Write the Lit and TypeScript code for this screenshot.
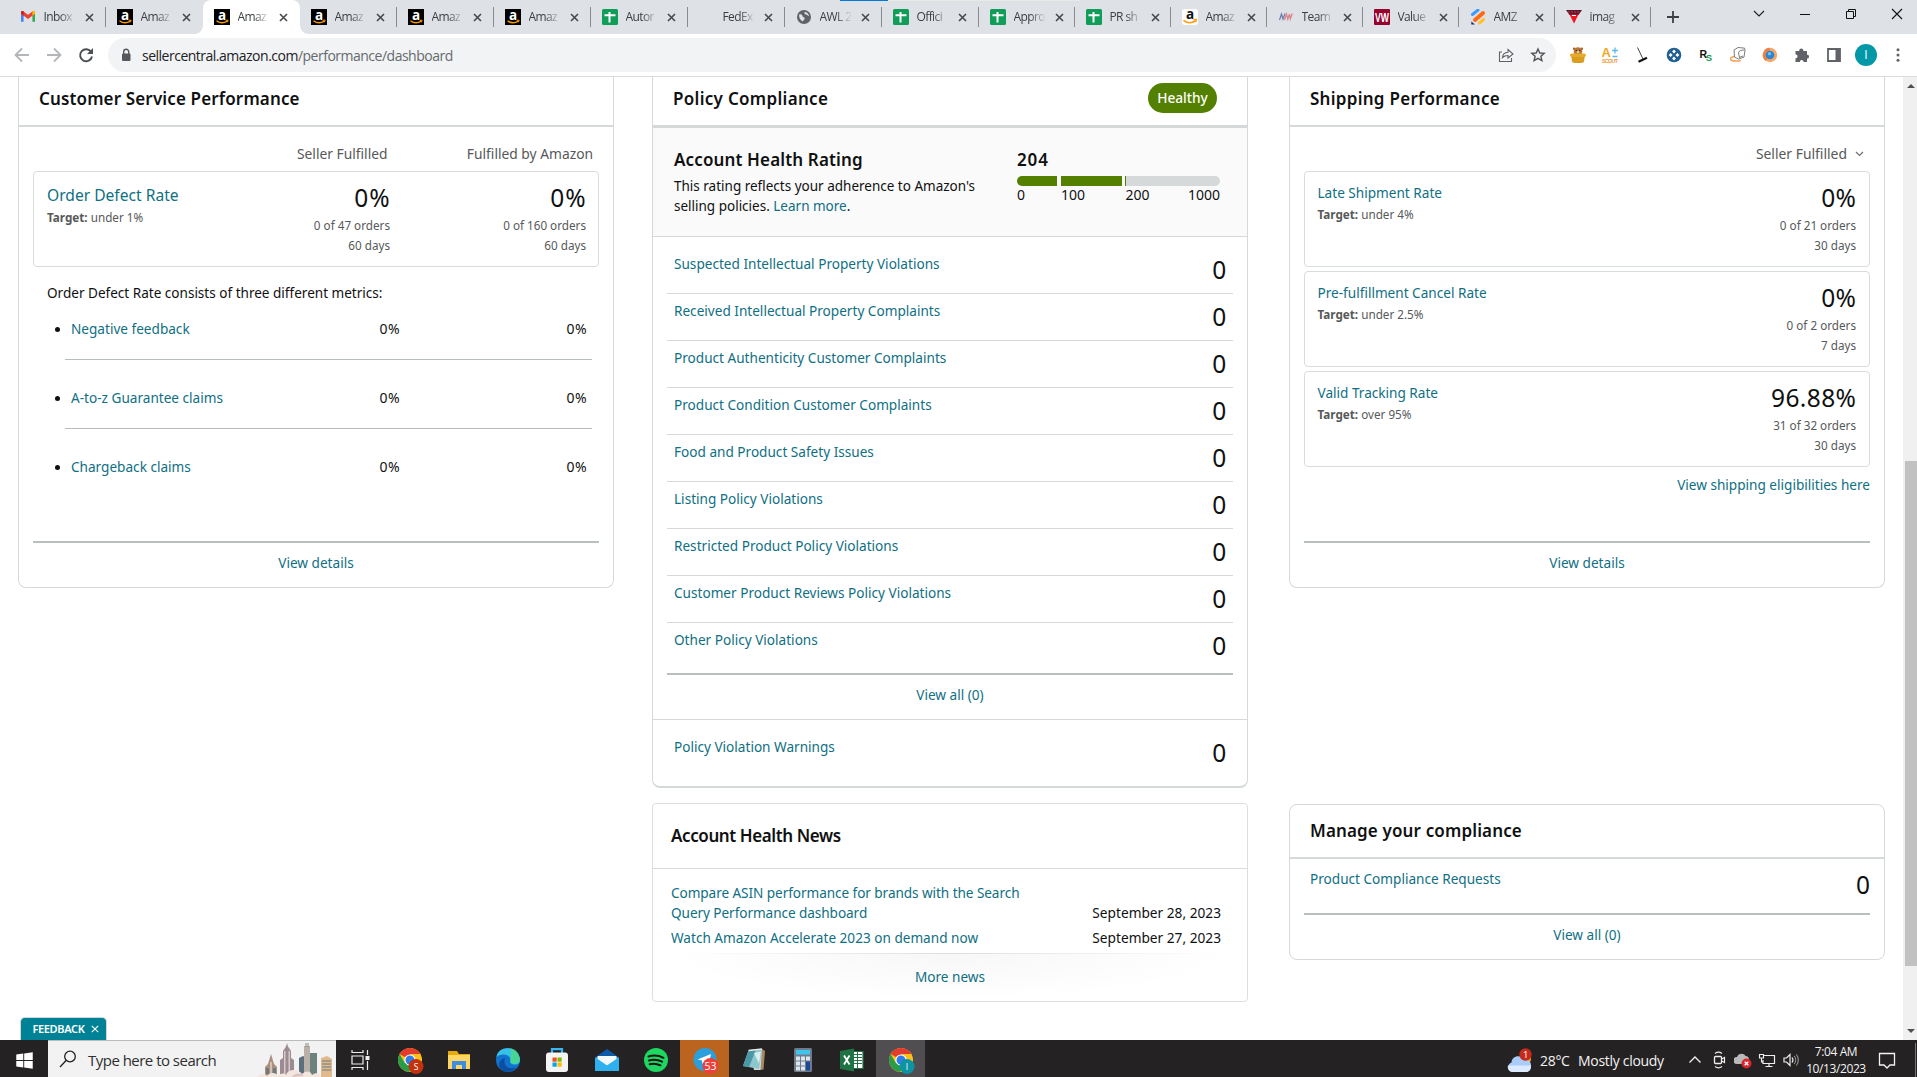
import { LitElement, html, css, svg, nothing } from "lit";
import { customElement, property } from "lit/decorators.js";
import { classMap } from "lit/directives/class-map.js";

const UI = css`"Open Sans", "Noto Sans", "Liberation Sans", sans-serif`;
const EMBER = css`"Noto Sans", "Open Sans", "Liberation Sans", sans-serif`;

const box = (size: number, body: unknown, vb = "0 0 24 24") =>
  html`<svg width=${size} height=${size} viewBox=${vb} fill="none">${body}</svg>`;

/* ---------- favicons (16 x 16) ---------- */
const fav: Record<string, unknown> = {
  gmail: svg`<path d="M1 3.500v9.200h2.600V6.600z" fill="#4285f4"/><path d="M15 3.500v9.200h-2.600V6.600z" fill="#34a853"/>
    <path d="M1 3.600C1 2 2.800 1.800 3.600 2.400L8 5.700l4.400-3.300C13.300 1.800 15 2 15 3.600v1.200L8 10 1 4.800z" fill="#ea4335"/>
    <path d="M12.400 2.400C13.300 1.800 15 2 15 3.600v1.200l-2.600 2z" fill="#fbbc04"/><path d="M1 3.600C1 2 2.800 1.800 3.600 2.400v4.400L1 4.800z" fill="#c5221f"/>`,
  amazon: svg`<rect width="16" height="16" fill="#000"/><text x="8" y="10.500" text-anchor="middle" font-size="13.500" font-weight="700" font-family="Open Sans, sans-serif" fill="#fff">a</text><path d="M2.500 11.800c3.200 2.400 7.300 2.500 10.800.4" stroke="#f90" stroke-width="1.400"/><path d="M11.700 11.300l2.400-.2-.7 2.200" stroke="#f90" stroke-width="1"/>`,
  amazonLight: svg`<rect width="16" height="16" rx="3" fill="#fff"/><text x="8" y="10" text-anchor="middle" font-size="13.500" font-weight="700" font-family="Open Sans, sans-serif" fill="#111">a</text><path d="M1.500 11.300c3.500 3 8.300 3.100 12 .4" stroke="#f90" stroke-width="1.700"/><path d="M11.500 10.700l3-.2-.8 2.700" stroke="#f90" stroke-width="1.200"/>`,
  sheets: svg`<rect width="16" height="16" rx="1.500" fill="#0f9d58"/><path d="M7.500 3v10.500M2.500 6.200h11" stroke="#fff" stroke-width="2"/>`,
  blank: nothing,
  globe: svg`<circle cx="8" cy="8" r="7" fill="#5f6368"/><path d="M3.200 5.500c1.500-.5 3 .2 3.300 1.400.4 1.300 2 1 2.200 2.400.2 1.300-1.500 1.500-1.700 3.200-2.300-.8-4.300-3.700-3.800-7zM8.500 3c2.500 0 4.300 2 4.500 4.200-1.600 0-1.500-1.500-3-1.600-1.200-.1-1.800-1.300-1.500-2.600z" fill="#dee1e6"/>`,
  team: svg`<path d="M1.500 11l2-6 1.500 5 2-5.500" stroke="#3f4f95" stroke-width="1.200" opacity=".7"/><path d="M6.500 11l2-6 1.300 5 1.700-5 .8 5 2-5.500" stroke="#d96570" stroke-width="1.300" opacity=".75"/>`,
  vw: svg`<rect width="16" height="16" rx="1" fill="#98002e"/><text x="8" y="12.600" text-anchor="middle" font-size="12" font-weight="700" textLength="14" lengthAdjust="spacingAndGlyphs" font-family="Liberation Sans, sans-serif" fill="#fff">VW</text>`,
  amz: svg`<path d="M2.500 5.500L8 1" stroke="#3b9cff" stroke-width="3" stroke-linecap="round"/><path d="M5 11l8-7" stroke="#ff6a13" stroke-width="4" stroke-linecap="round"/><path d="M1.300 12.500L5 15.500H1.300z" fill="#1a2a6c"/><path d="M9.500 14l4-3.500" stroke="#ffc22e" stroke-width="3" stroke-linecap="round"/>`,
  imag: svg`<path d="M0 1h16l-3.500 5h-9z" fill="#5b1833"/><path d="M3.500 5.500h9L8 14.500z" fill="#ef1620"/><path d="M6 6.500h4" stroke="#fff"/><path d="M2 3h12" stroke="#d33" stroke-dasharray="2 1"/>`,
};

const TABS: [string, string][] = [
  ["gmail", "Inbox"], ["amazon", "Amaz"], ["amazon", "Amaz"], ["amazon", "Amaz"], ["amazon", "Amaz"], ["amazon", "Amaz"],
  ["sheets", "Autor"], ["blank", "FedEx"], ["globe", "AWL 2"], ["sheets", "Offici"], ["sheets", "Appro"], ["sheets", "PR sh"],
  ["amazonLight", "Amaz"], ["team", "Team"], ["vw", "Value"], ["amz", "AMZ"], ["imag", "imag"],
];

/* ---------- browser chrome ---------- */
@customElement("browser-chrome")
class BrowserChrome extends LitElement {
  static styles = css`
    :host { display: block; font-family: ${UI}; color: #3c4043; }
    svg { display: block; flex: none; }
    .strip { position: relative; height: 34px; background: #dee1e6; display: flex; align-items: stretch; padding-left: 9px; box-sizing: border-box; }
    .progress { position: absolute; left: 840px; top: 0; width: 241px; height: 1px; background: #e9e9e9; z-index: 2; }
    .progress i { display: block; width: 48px; height: 1px; background: #0078d7; }
    .tab { position: relative; width: 97px; box-sizing: border-box; display: flex; align-items: center; padding: 0 0 0 11px; }
    .tab.narrow { width: 96px; }
    .tab .name { font-size: 12px; width: 35px; margin-left: 7.500px; white-space: nowrap; line-height: 20px; letter-spacing: -.6px;
      -webkit-mask-image: linear-gradient(90deg, #000 45%, transparent 92%); mask-image: linear-gradient(90deg, #000 45%, transparent 92%); }
    .tab .x { margin-left: 6px; }
    .tab.sep::after { content: ""; position: absolute; right: 0; top: 7px; width: 1px; height: 20px; background: #868b90; }
    .tab.active { background: #fff; border-radius: 8px 8px 0 0; }
    .tab.active::before, .tab.active::after { content: ""; position: absolute; bottom: 0; width: 8px; height: 8px; }
    .tab.active::before { left: -8px; background: radial-gradient(circle at 0 0, transparent 7.500px, #fff 8px); }
    .tab.active::after { right: -8px; background: radial-gradient(circle at 100% 0, transparent 7.500px, #fff 8px); }
    .plus { display: flex; align-items: center; margin-left: 15px; }
    .win { margin-left: auto; display: flex; align-items: center; height: 28px; padding-right: 12px; gap: 30px; }
    .bar { height: 42px; background: #fff; display: flex; align-items: center; border-bottom: 1px solid #dadce0; padding-left: 14px; }
    .nav { display: flex; gap: 16px; width: 94px; }
    .omni { width: 1448px; height: 34px; border-radius: 17px; background: #f1f3f4; box-sizing: border-box; display: flex; align-items: center; padding: 0 10px 0 10px; }
    .url { font-size: 14px; margin-left: 8px; color: #202124; letter-spacing: -.5px; line-height: 20px; white-space: nowrap; padding-top: 1px; }
    .url span { color: #666a6e; }
    .omni .right { margin-left: auto; display: flex; gap: 16px; }
    .ext { display: flex; gap: 16px; margin-left: 14px; align-items: center; }
    .ava { width: 22px; height: 22px; margin: 0 -3px; border-radius: 50%; background: #0097a7; color: #fff; font-size: 12px; line-height: 22px; text-align: center; }
  `;
  render() {
    return html`
      <div class="strip">
        <div class="progress"><i></i></div>
        ${TABS.map(([icon, name], i) => html`
          <div class=${classMap({ tab: true, narrow: i > 9, active: i === 2, sep: i !== 1 && i !== 2 })}>
            ${box(16, fav[icon], "0 0 16 16")}
            <span class="name">${name}</span>
            <svg class="x" width="9" height="9" viewBox="0 0 9 9"><path d="M1 1l7 7M8 1l-7 7" stroke="#45494d" stroke-width="1.600"/></svg>
          </div>`)}
        <div class="plus">${box(14, svg`<path d="M7 1v12M1 7h12" stroke="#3c4043" stroke-width="1.800"/>`, "0 0 14 14")}</div>
        <div class="win">
          ${box(16, svg`<path d="M3 5l5 5 5-5" stroke="#222" stroke-width="1.200"/>`, "0 0 16 16")}
          ${box(16, svg`<path d="M3 8.500h10" stroke="#111" stroke-width="1"/>`, "0 0 16 16")}
          ${box(16, svg`<path d="M3.500 5.500h7v7h-7zM5.500 5.500v-2h7v7h-2" stroke="#111"/>`, "0 0 16 16")}
          ${box(16, svg`<path d="M3 3l10 10M13 3L3 13" stroke="#111" stroke-width="1.100"/>`, "0 0 16 16")}
        </div>
      </div>
      <div class="bar">
        <div class="nav">
          ${box(16, svg`<path d="M15 8H2M8 1.500L1.500 8 8 14.500" stroke="#b4b7ba" stroke-width="1.800"/>`, "0 0 16 16")}
          ${box(16, svg`<path d="M1 8h13M8 1.500L14.500 8 8 14.500" stroke="#b4b7ba" stroke-width="1.800"/>`, "0 0 16 16")}
          ${box(16, svg`<path d="M13.200 5A6 6 0 1 0 14 9.500" stroke="#4b4f54" stroke-width="1.900"/><path d="M15 1v6H9z" fill="#4b4f54"/>`, "0 0 16 16")}
        </div>
        <div class="omni">
          ${box(16, svg`<rect x="4" y="6.500" width="8.500" height="7.500" rx="1" fill="#54585d"/><path d="M5.700 7V4.800a2.500 2.500 0 0 1 5 0V7" stroke="#54585d" stroke-width="1.400"/>`, "0 0 16 16")}
          <div class="url">sellercentral.amazon.com<span>/performance/dashboard</span></div>
          <div class="right">
            ${box(16, svg`<path d="M4 5H1.500v9.500h12V11" stroke="#5f6368" stroke-width="1.100"/><path d="M4.500 10.500c.3-3.500 2-5 5.500-5.200V2.500l5 4.500-5 4V8.500c-2.300 0-4 .5-5.500 2z" stroke="#5f6368" stroke-width="1.100"/>`, "0 0 16 16")}
            ${box(16, svg`<path d="M8 2l1.800 4 4.400.4-3.300 2.900 1 4.300L8 11.300l-3.900 2.300 1-4.300-3.300-2.900L6.200 6z" stroke="#4f5358" stroke-width="1.400"/>`, "0 0 16 16")}
          </div>
        </div>
        <div class="ext">
          ${box(16, svg`<circle cx="4.300" cy="1.800" r="1.400" fill="#a0642a"/><circle cx="11.700" cy="1.800" r="1.400" fill="#a0642a"/><circle cx="8" cy="4.500" r="4.300" fill="#b9783a"/><circle cx="6.300" cy="3.500" r=".7" fill="#43270f"/><circle cx="9.700" cy="3.500" r=".7" fill="#43270f"/><circle cx="8" cy="5" r="1.300" fill="#ecc994"/><rect x="0" y="6.500" width="16" height="3.600" rx="1.800" fill="#e5ab2a"/><path d="M1.300 10h13.400l-.7 4.500c0 1-2 1.500-6 1.500s-6-.5-6-1.500z" fill="#d99d20"/>`, "0 0 16 16")}
          ${box(16, svg`<text x="-.5" y="10.300" font-size="13" font-weight="700" font-family="Liberation Sans, sans-serif" fill="#f7a823">A</text><path d="M10 3.500h6M13 .5v6M10.500 9.500h5" stroke="#5cbcec" stroke-width="1.300"/><text x="0" y="15.500" font-size="5.300" font-weight="700" textLength="16" font-family="Liberation Sans, sans-serif" fill="#f0983a">SCOUT</text>`, "0 0 16 16")}
          ${box(16, svg`<path d="M3.500.5L9 12" stroke="#444" stroke-width="1"/><path d="M4.500 14.800l8.500-4" stroke="#111" stroke-width="2.200"/>`, "0 0 16 16")}
          ${box(16, svg`<circle cx="8" cy="8" r="7.300" fill="#205f8f"/><path d="M8 2.600l1.900 2L8 6.600l-1.900-2zM8 9.400l1.900 2-1.900 2-1.900-2zM4.600 6l2 2-2 2-2-2zM11.400 6l2 2-2 2-2-2z" fill="#fff"/>`, "0 0 16 16")}
          ${box(16, svg`<text x="1.500" y="11" font-size="10.500" font-weight="700" font-family="Liberation Sans, sans-serif" fill="#111">R</text><text x="7.700" y="13.500" font-size="9.500" font-weight="700" font-family="Liberation Sans, sans-serif" fill="#15964a">S</text>`, "0 0 16 16")}
          ${box(16, svg`<path d="M4.500 9.500C0 10.500-.5 12 1 13c2.500 1.300 7 1.200 10 .5" stroke="#f2a45c" stroke-width="1.500"/><path d="M4 3l4-2.500 6.500.6.500 2-1 7-5.500 2L4.500 10zM9.500 10.500L8.500 6C9 3.500 11 3 14.500 3M9 10.500l4-1.500" stroke="#7c7c7c" stroke-width="1"/>`, "0 0 16 16")}
          ${box(16, svg`<circle cx="8" cy="8" r="7.200" fill="#f7a76a"/><path d="M8 .8a7.200 7.200 0 0 0-4 13.200l2-3z" fill="#ee8044"/><circle cx="8" cy="8" r="4.300" fill="#2a86d0"/><circle cx="7.500" cy="6.800" r="1.700" fill="#6cc0f5"/>`, "0 0 16 16")}
          ${box(16, svg`<path d="M1.500 4h3.800c-.8-3.500 4.800-3.500 4 0h3.700v3.700c2.700-.6 2.700 4.300 0 3.700V15H9.500c.5-2.700-4-2.700-3.500 0H1.500v-3.700c2.700.5 2.700-4.200 0-3.700z" fill="#5f6368"/>`, "0 0 16 16")}
          ${box(16, svg`<path d="M2 2h12v12H2z" stroke="#5f6368" stroke-width="1.800"/><path d="M9.500 2H14v12H9.500z" fill="#5f6368"/>`, "0 0 16 16")}
          <div class="ava">I</div>
          ${box(16, svg`<circle cx="8" cy="2.700" r="1.500" fill="#5f6368"/><circle cx="8" cy="8" r="1.500" fill="#5f6368"/><circle cx="8" cy="13.300" r="1.500" fill="#5f6368"/>`, "0 0 16 16")}
        </div>
      </div>`;
  }
}

/* ---------- shared card styles ---------- */
const card = css`
  :host { display: block; font-family: ${EMBER}; font-size: 13.600px; line-height: 20px; color: #0f1111; }
  .card { border: 1px solid #d5d9d9; border-radius: 8px; background: #fff; box-sizing: border-box; width: 596px; }
  .card.cut { border-top: 0; border-radius: 0 0 8px 8px; }
  .link { color: #0f6f83; }
  .title { font-weight: 600; font-size: 17px; line-height: 24px; white-space: nowrap; letter-spacing: .14px; }
  .head { border-bottom: 2px solid #d5d9d9; box-sizing: border-box; padding-left: 20px; }
  .num { font-size: 24.500px; line-height: 28px; letter-spacing: .4px; margin-right: -.4px; }
  .rule { height: 2px; background: #b8bfbf; margin: 0 14px; }
  .foot { text-align: center; line-height: 20px; padding-top: 10px; }
  .small { font-size: 11.700px; color: #565959; line-height: 20px; }
  .metric { border: 1px solid #d9dcdc; border-radius: 4px; height: 96px; box-sizing: border-box; display: flex; justify-content: space-between; }
  .vals { text-align: right; padding-top: 12px; }
  .vals .small:nth-child(2) { margin-top: 3px; }
`;

@customElement("service-card")
class ServiceCard extends LitElement {
  static styles = [card, css`
    .card { height: 511px; }
    .head { height: 50px; padding-top: 10px; }
    .cols { display: flex; padding: 17px 20px 0 278px; justify-content: space-between; color: #565959; font-size: 13.800px; }
    .metric { margin: 7px 14px 0; }
    .lead { padding: 11px 0 0 13px; }
    .lead .big { font-size: 15.600px; line-height: 24px; }
    .pair { display: flex; }
    .pair .vals:first-child { width: 120px; }
    .pair .vals { width: 196px; }
    .metric .pair { padding-right: 12px; }
    .pair .num { letter-spacing: 1px; margin-right: -.5px; }
    .intro { margin: 16px 0 0 28px; font-size: 13.550px; }
  `];
  render() {
    const rows = ["Negative feedback", "A-to-z Guarantee claims", "Chargeback claims"];
    return html`<section class="card cut">
      <div class="head title">Customer Service Performance</div>
      <div class="cols"><span>Seller Fulfilled</span><span>Fulfilled by Amazon</span></div>
      <div class="metric">
        <div class="lead"><div class="big link">Order Defect Rate</div><div class="small"><b>Target:</b> under 1%</div></div>
        <div class="pair">
          <div class="vals"><div class="num">0%</div><div class="small">0 of 47 orders</div><div class="small">60 days</div></div>
          <div class="vals"><div class="num">0%</div><div class="small">0 of 160 orders</div><div class="small">60 days</div></div>
        </div>
      </div>
      <div class="intro">Order Defect Rate consists of three different metrics:</div>
      <metric-list .rows=${rows}></metric-list>
      <div class="rule"></div>
      <div class="foot link">View details</div>
    </section>`;
  }
}

@customElement("metric-list")
class MetricList extends LitElement {
  @property({ attribute: false }) rows: string[] = [];
  static styles = [card, css`
    :host { padding: 16px 21px 0 34px; height: 238px; box-sizing: border-box; }
    .row { display: flex; align-items: center; height: 20px; }
    .row i { width: 5px; height: 5px; border-radius: 50%; background: #0f1111; margin: 0 11px 0 2px; }
    .row .link { flex: 1; white-space: nowrap; }
    .row span { width: 187px; text-align: right; padding-right: 5px; box-sizing: border-box; font-size: 14px; letter-spacing: .4px; }
    .row span:first-of-type { width: 120px; }
    .line { height: 1px; background: #b7bdbd; margin: 20px 0 28px 12px; }
  `];
  render() {
    return this.rows.map((r, i) => html`
      ${i ? html`<div class="line"></div>` : nothing}
      <div class="row"><i></i><div class="link">${r}</div><span>0%</span><span>0%</span></div>`);
  }
}

@customElement("policy-card")
class PolicyCard extends LitElement {
  static styles = [card, css`
    .card { height: 711px; border-bottom-width: 2px; }
    .head { height: 51px; border-bottom-width: 3px; display: flex; justify-content: space-between; padding: 6px 30px 0 20px; }
    .head .title { padding-top: 4px; letter-spacing: .3px; }
    .pill { background: #538000; color: #fff; height: 30px; width: 69px; border-radius: 15px; text-align: center; line-height: 29px; font-size: 13.700px; font-weight: 500; }
    .rating { height: 109px; background: #fafafa; border-bottom: 1px solid #d5d9d9; box-sizing: border-box; display: flex; justify-content: space-between; padding: 20px 27px 0 21px; }
    .rating p { margin: 4px 0 0; width: 320px; line-height: 20px; font-size: 13.500px; }
    .score { width: 203px; }
    .score .title { letter-spacing: .9px; }
    .meter { display: flex; height: 10px; border-radius: 5px; overflow: hidden; margin-top: 4px; }
    .meter i { background: #538000; }
    .meter .a { width: 40px; margin-right: 4px; } .meter .b { width: 61px; margin-right: 3px; } .meter .c { width: 1px; }
    .meter .rest { background: #d5d9d9; flex: 1; }
    .ticks { display: grid; grid-template-columns: 44px 64.500px 1fr auto; line-height: 18px; font-size: 14px; }
    .rows { padding: 10px 14px 0; }
    .row { display: flex; justify-content: space-between; padding: 7px 7px 1px; border-bottom: 1px solid #d5d9d9; height: 38px; }
    .row:last-child { border: 0; height: 42px; }
    .foot { height: 34px; border-bottom: 1px solid #d5d9d9; }
    .warn { display: flex; justify-content: space-between; padding: 17px 21px 0; }
    .num { padding-top: 2px; margin-right: -.6px; }
  `];
  render() {
    const rows = ["Suspected Intellectual Property Violations", "Received Intellectual Property Complaints",
      "Product Authenticity Customer Complaints", "Product Condition Customer Complaints", "Food and Product Safety Issues",
      "Listing Policy Violations", "Restricted Product Policy Violations", "Customer Product Reviews Policy Violations", "Other Policy Violations"];
    return html`<section class="card cut">
      <div class="head"><div class="title">Policy Compliance</div><div class="pill">Healthy</div></div>
      <div class="rating">
        <div><div class="title">Account Health Rating</div>
          <p>This rating reflects your adherence to Amazon's<br>selling policies. <span class="link">Learn more</span>.</p></div>
        <div class="score"><div class="title">204</div>
          <div class="meter"><i class="a"></i><i class="b"></i><i class="c"></i><i class="rest"></i></div>
          <div class="ticks"><span>0</span><span>100</span><span>200</span><span>1000</span></div></div>
      </div>
      <div class="rows">${rows.map((r) => html`<div class="row"><span class="link">${r}</span><span class="num">0</span></div>`)}</div>
      <div class="rule"></div>
      <div class="foot link">View all (0)</div>
      <div class="warn"><span class="link">Policy Violation Warnings</span><span class="num">0</span></div>
    </section>`;
  }
}

@customElement("shipping-card")
class ShippingCard extends LitElement {
  static styles = [card, css`
    .card { height: 511px; }
    .head { height: 50px; padding-top: 10px; letter-spacing: .27px; }
    .pick { display: flex; justify-content: flex-end; align-items: center; gap: 8px; padding: 17px 20px 0 0; color: #565959; font-size: 13.900px; }
    .list { display: grid; gap: 4px; margin: 7px 14px 0; }
    .lead { padding: 11px 0 0 12.500px; }
    .lead .small { padding-top: 1px; }
    .metric { padding-right: 13px; }
    .elig { text-align: right; margin: 8px 14px 46px 0; }
  `];
  render() {
    const rows = [["Late Shipment Rate", "under 4%", "0%", "0 of 21 orders", "30 days"],
      ["Pre-fulfillment Cancel Rate", "under 2.5%", "0%", "0 of 2 orders", "7 days"],
      ["Valid Tracking Rate", "over 95%", "96.88%", "31 of 32 orders", "30 days"]];
    return html`<section class="card cut">
      <div class="head title">Shipping Performance</div>
      <div class="pick"><span>Seller Fulfilled</span><svg width="9" height="7" viewBox="0 0 9 7" fill="none"><path d="M1 1l3.500 3.500L8 1" stroke="#6a6f6f" stroke-width="1.200"/></svg></div>
      <div class="list">${rows.map(([n, t, v, o, d]) => html`<div class="metric">
        <div class="lead"><div class="link">${n}</div><div class="small"><b>Target:</b> ${t}</div></div>
        <div class="vals"><div class="num">${v}</div><div class="small">${o}</div><div class="small">${d}</div></div></div>`)}</div>
      <div class="elig link">View shipping eligibilities here</div>
      <div class="rule"></div>
      <div class="foot link">View details</div>
    </section>`;
  }
}

@customElement("news-card")
class NewsCard extends LitElement {
  static styles = [card, css`
    .card { height: 199px; border-radius: 4px; border-color: #dcdfdf; }
    .head { height: 65px; border-bottom: 1px solid #d9dcdc; padding: 20px 0 0 18px; letter-spacing: -.4px; }
    .body { padding: 14px 26px 0 18px; }
    .item { display: flex; justify-content: space-between; align-items: flex-end; margin-bottom: 5px; }
    .item span:last-child { font-size: 13.700px; }
    .item:first-child .link { letter-spacing: -.07px; }
    .more { height: 46px; margin-top: 1px; text-align: center; line-height: 48px; background:
      linear-gradient(90deg, transparent 4%, rgba(0,0,0,.1) 50%, transparent 96%) top / 100% 1px no-repeat,
      radial-gradient(ellipse 48% 100% at 50% 0, rgba(0,0,0,.03), transparent); }
  `];
  render() {
    return html`<section class="card">
      <div class="head title">Account Health News</div>
      <div class="body">
        <div class="item"><span class="link">Compare ASIN performance for brands with the Search<br>Query Performance dashboard</span><span>September 28, 2023</span></div>
        <div class="item"><span class="link">Watch Amazon Accelerate 2023 on demand now</span><span>September 27, 2023</span></div>
      </div>
      <div class="more link">More news</div>
    </section>`;
  }
}

@customElement("compliance-card")
class ComplianceCard extends LitElement {
  static styles = [card, css`
    .card { height: 156px; }
    .head { height: 54px; padding-top: 14px; }
    .row { display: flex; justify-content: space-between; padding: 10px 14px 0 20px; height: 44px; }
    .row .num { padding-top: 1.500px; }
  `];
  render() {
    return html`<section class="card">
      <div class="head title">Manage your compliance</div>
      <div class="row"><span class="link">Product Compliance Requests</span><span class="num">0</span></div>
      <div class="rule"></div>
      <div class="foot link">View all (0)</div>
    </section>`;
  }
}

/* ---------- taskbar ---------- */
const chromeLogo = (letter: string, color: string) => svg`
  <circle cx="12" cy="12" r="12" fill="#fbc116"/>
  <path d="M12 12L1.600 6A12 12 0 0 1 22.400 6H12z" fill="#e33b2e"/>
  <path d="M1.600 6a12 12 0 0 0 9.400 18l5.500-9.500L12 12 6.800 15z" fill="#2a9b48"/>
  <circle cx="12" cy="12" r="5.600" fill="#fff"/><circle cx="12" cy="12" r="4.500" fill="#2f7de8"/>
  <circle cx="18" cy="18.500" r="7.500" fill=${color}/>
  <text x="18" y="21.500" font-size="8.500" text-anchor="middle" font-family="Open Sans, sans-serif" fill="#fff">${letter}</text>`;

const APPS: [string, unknown][] = [
  ["", svg`<path d="M4 4.500h11M4 19.500h11M4 8h11v8H4zM4 2v3M15 2v3M4 19v3M15 19v3M19.500 2v5M19.500 13v9" stroke="#eee" stroke-width="1.200"/><rect x="17.500" y="8" width="4" height="4" fill="#eee"/>`],
  ["", chromeLogo("S", "#c2320f")],
  ["", svg`<path d="M1 3h9l2 3h11v15H1z" fill="#e8a70b"/><path d="M1 7h22v14H1z" fill="#ffd666"/><path d="M5 13h14v8h-4v-4H9v4H5z" fill="#3b8ee0"/>`],
  ["", svg`<circle cx="12" cy="12" r="12" fill="#1273cf"/><path d="M.5 9C2-3 21-3 24 11c.5 5-4 6.500-8 5-3-1-1-3-1.500-5C13 6 5 5 .5 9z" fill="#35c1e8"/><path d="M14 .3c6 1 9.500 5 9.800 11 0 4-4.500 5.500-8 4-3-1-1-3-1.500-5 1-3 1-7-.3-10z" fill="#4fdc7c" opacity=".75"/><path d="M8.500 13c-.5 5 5 9.500 12 6-4 6-12 6-15.500 2.500C1 17 4 11 9 10z" fill="#0c4ea0"/>`],
  ["", svg`<path d="M7 6V1.200h10V6" stroke="#37b8f4" stroke-width="2.200"/><rect x="1" y="4.500" width="22" height="19.500" rx="3" fill="#f4f4f4"/><path d="M7.500 9.500h4.200v4.200H7.500z" fill="#f25022"/><path d="M12.500 9.500h4.200v4.200h-4.200z" fill="#7fba00"/><path d="M7.500 14.500h4.200v4.200H7.500z" fill="#00a4ef"/><path d="M12.500 14.500h4.200v4.200h-4.200z" fill="#ffb900"/>`],
  ["", svg`<path d="M0 9.500L12 1l12 8.500z" fill="#0f5aa8"/><path d="M0 9.500h24V23H0z" fill="#33b4ee"/><path d="M2.500 8h19v3L12 17.500 2.500 11z" fill="#f5f8fb"/><path d="M0 9.500l12 8.300 12-8.300V23H0z" fill="#2fb0ef"/>`],
  ["", svg`<circle cx="12" cy="12" r="12" fill="#1ed760"/><path d="M4.500 8.500c5-1.500 10.500-1 15 1.300M5 12.500c4.500-1.200 9-.8 13 1.200M5.700 16.200c3.700-1 7.300-.6 10.800 1.100" stroke="#141414" stroke-width="2" stroke-linecap="round"/>`],
  ["orange", svg`<circle cx="12" cy="11.500" r="11.500" fill="#2b9fdb"/><path d="M4.500 11.500L18 6l-2.500 11-4-3-2 2-.5-3.500z" fill="#fff"/><circle cx="17.500" cy="18" r="8" fill="#ef3f3a"/><text x="17.500" y="21.800" font-size="10.500" text-anchor="middle" font-family="Open Sans, sans-serif" fill="#fff">53</text>`],
  ["", svg`<path d="M20 1l3 2-1.500 18.500L17 22z" fill="#a88a5e"/><path d="M7 2l13-1-1.500 21H12z" fill="#cfd8da"/><path d="M6.500 2.500L20 1l-3 20L1 18z" fill="#8fc7cf"/><path d="M6.500 2.500L14 1.600 7 19.200 1 18z" fill="#4a98a8"/><path d="M12 5l7-1.500-2 12z" fill="#d8eff0"/><path d="M6.500 2.500L20 1" stroke="#e8e8e8" stroke-width="1.500"/>`],
  ["", svg`<rect x="3" y="0" width="18" height="24" rx="1.500" fill="#6f7b8b"/><path d="M5 2h14v4.500H5z" fill="#3fc5f0"/><path d="M5 8.500h4v4H5zM10 8.500h4v4h-4zM15 8.500h4v4h-4zM5 13.500h4v4H5zM10 13.500h4v4h-4zM5 18.500h4v4H5zM10 18.500h4v4h-4z" fill="#dfe5ec"/><path d="M15 13.500h4v9h-4z" fill="#1c4b96"/>`],
  ["", svg`<path d="M12 3.500h11v17H12z" fill="#fff" stroke="#1f7244" stroke-width="1.200"/><path d="M13 6.500h9M13 9.500h9M13 12.500h9M13 15.500h9M17.500 4v16" stroke="#1f7244"/><path d="M0 3l14-2.500v23L0 21z" fill="#1f7244"/><path d="M4 7.500l5.500 9M9.500 7.500L4 16.500" stroke="#fff" stroke-width="1.800"/>`],
  ["lit", chromeLogo("I", "#0d93a3")],
];

@customElement("task-bar")
class TaskBar extends LitElement {
  static styles = css`
    :host { display: flex; height: 37px; background: #242223; font-family: ${UI}; color: #f3f3f3; align-items: stretch; }
    svg { display: block; flex: none; }
    .start { width: 48px; display: flex; align-items: center; justify-content: center; padding-top: 3px; box-sizing: border-box; }
    .search { width: 288px; height: 37px; background: #f2f2f2; border-top: 1px solid #bbb; box-sizing: border-box; display: flex; align-items: center; color: #2f2f2f; padding-left: 11px; overflow: hidden; }
    .search span { font-size: 15px; letter-spacing: -.52px; margin-left: 11px; flex: 1; padding-top: 2px; white-space: nowrap; }
    .search .city { align-self: flex-end; }
    .apps { display: flex; }
    .app { width: 49.100px; display: flex; align-items: center; justify-content: center; padding: 3px 0 0 1px; box-sizing: border-box; }
    .app:first-child { padding-left: 0; padding-right: 1px; }
    .app.orange { background: #bb641f; } .app.lit { background: #504e50; }
    .app svg { overflow: visible; }
    .tray { margin-left: auto; display: flex; align-items: center; padding: 3px 1px 0 0; box-sizing: border-box; font-size: 14px; letter-spacing: -.3px; white-space: nowrap; }
    .tray .temp { margin-left: 8px; width: 38px; }
    .tray .sky { width: 108px; }
    .icons { display: flex; gap: 6px; }
    .clock { width: 72px; font-size: 12px; line-height: 17.500px; text-align: center; letter-spacing: -.4px; }
    .note { width: 44px; display: flex; justify-content: flex-start; border-right: 1px solid #777; padding-left: 6px; height: 34px; align-items: center; box-sizing: border-box; }
  `;
  render() {
    return html`
      <div class="start">${box(17, svg`<path d="M0 2.500L6.800 1.500v6.300H0zM7.700 1.400L16 .2v7.600H7.700zM0 8.700h6.800V15L0 14zM7.700 8.700H16v7.600L7.700 15.100z" fill="#fff"/>`, "0 0 16 16.500")}</div>
      <div class="search">
        ${box(18, svg`<circle cx="11" cy="6.500" r="5.300" stroke="#222" stroke-width="1.300"/><path d="M7.300 10.300L1 17" stroke="#222" stroke-width="1.300"/>`, "0 0 18 18")}
        <span>Type here to search</span>
        <svg class="city" width="78" height="34" viewBox="0 0 78 34">
          <path d="M7 34V24l3-3 1.500-5L13 11l1.500 5 1.500 5 3 3v10z" fill="#a98f80"/><path d="M12 19h2v12h-2z" fill="#d7bfae"/><path d="M8 25h3v6H8zM15 25h3v6h-3z" fill="#6c7c7a"/>
          <path d="M22 34V17l3-2V8l3-4.500L29 0l1 3.500L33 8v7l3 2v17z" fill="#9c8b93"/><path d="M26 8h1.500v26H26zM30.500 8H32v26h-1.500z" fill="#d8c9c9"/>
          <path d="M41 34V15l4-2 4 2v19z" fill="#5d6e7c"/><path d="M46 3h6v31h-6z" fill="#b9b0a8"/><path d="M48 0v4M50 0v4" stroke="#888"/>
          <path d="M52 10h7v24h-7z" fill="#6d827d"/><path d="M63 15l6-2 5 3v18H63z" fill="#e0b98c"/><path d="M64 18h9M64 21h9M64 24h9M64 27h9" stroke="#6a7c88"/>
          <path d="M0 34c1-4 7-4 9-1 3-4 9-4 11 0 3-3 6-3 8-1 2-6 12-7 16-1 4-4 9-3 10 1 4-3 8-2 9 2z" fill="#f3e6df"/>
          <path d="M34 34c2-4 8-5 12-1" fill="#d9c5bf"/>
        </svg>
      </div>
      <div class="apps">${APPS.map(([c, i]) => html`<div class="app ${c}">${box(24, i)}</div>`)}</div>
      <div class="tray">
        ${box(25, svg`<circle cx="18" cy="11" r="6" fill="#f6a821"/><path d="M5 24a5 5 0 0 1-.5-9.500C5 7.500 14 6 16.500 12c5-1 8 2.500 7.500 6.500 0 3-2 5.500-5 5.500z" fill="#a9cdfb"/><path d="M5 24a5 5 0 0 1-4-6.500h23c.2 4-2 6.500-5 6.500z" fill="#dbeafe"/><circle cx="18.500" cy="6.500" r="6.200" fill="#c42b1c"/><text x="18.500" y="10" font-size="9.500" text-anchor="middle" font-family="Open Sans, sans-serif" fill="#fff">1</text>`, "0 0 25 25")}
        <span class="temp">28°C</span><span class="sky">Mostly cloudy</span>
        <div class="icons">
          ${box(18, svg`<path d="M3.500 11.500L9 6l5.500 5.500" stroke="#eee" stroke-width="1.400"/>`, "0 0 18 18")}
          ${box(18, svg`<rect x="4.500" y="5.500" width="7" height="7" rx="1" stroke="#eee" stroke-width="1.300"/><path d="M11.500 8l3-1.500v5l-3-1.500M5 2.500c2-1.500 5-1.500 7 0M5 15.500c2 1.500 5 1.500 7 0" stroke="#eee" stroke-width="1.200"/>`, "0 0 18 18")}
          ${box(18, svg`<path d="M3 13a3.500 3.500 0 0 1 0-7c1-4 7-4.500 8.500-1 3 0 4.500 3 3.500 8z" fill="#b9b9b9"/><circle cx="12.500" cy="12.500" r="5" fill="#d9252d"/><path d="M10.700 10.700l3.600 3.600M14.300 10.700l-3.600 3.600" stroke="#fff" stroke-width="1.300"/>`, "0 0 18 18")}
          ${box(18, svg`<path d="M6 4.500h10.500v8H5V9M11 12.500v3M7.500 15.500h7" stroke="#eee" stroke-width="1.200"/><path d="M1.500 3.500h4V7h-4zM3.500 7v4H5" stroke="#eee" stroke-width="1.100"/>`, "0 0 18 18")}
          ${box(18, svg`<path d="M2 7h2.500L8 3.500v11L4.500 11H2z" stroke="#eee" stroke-width="1.200"/><path d="M10 6.500c1.200 1.500 1.200 3.500 0 5" stroke="#eee" stroke-width="1.200"/><path d="M12.200 5c2 2.300 2 5.700 0 8M14.300 3.500c2.700 3 2.700 8 0 11" stroke="#999" stroke-width="1.100"/>`, "0 0 18 18")}
        </div>
        <div class="clock">7:04 AM<br>10/13/2023</div>
        <div class="note">${box(18, svg`<path d="M1.500 2.500h15v11.500h-4.500L9 17l-3-3H1.500z" stroke="#f3f3f3" stroke-width="1.300"/>`, "0 0 18 18")}</div>
      </div>`;
  }
}

/* ---------- page ---------- */
@customElement("app-root")
class AppRoot extends LitElement {
  static styles = css`
    :host { display: flex; flex-direction: column; width: 1917px; height: 1077px; overflow: hidden; background: #fff; }
    .view { position: relative; display: flex; height: 963px; overflow: hidden; }
    .page { width: 1903px; display: grid; grid-template-columns: 634px 637px 596px; align-items: start; padding-left: 18px; box-sizing: border-box; }
    .mid { display: grid; gap: 15px; }
    .right { display: grid; gap: 216px; }
    .scroll { width: 14px; background: #f0f0f0; display: flex; flex-direction: column; align-items: flex-end; }
    .scroll svg { display: block; width: 12px; }
    .thumb { width: 12px; height: 505px; background: #c1c1c1; margin: 367px 0 57px; }
    .fb { position: absolute; left: 20px; bottom: 0; width: 87px; height: 23px; box-sizing: border-box; border: 1px solid #cfd8da; border-bottom: 0; border-radius: 5px 5px 0 0;
      background: #008296; color: #fff; display: flex; align-items: center; justify-content: center; gap: 6px; padding-left: 4px;
      font: 600 11px/20px ${EMBER}; letter-spacing: -.32px; }
  `;
  render() {
    return html`
      <browser-chrome></browser-chrome>
      <main class="view">
        <div class="page">
          <service-card></service-card>
          <div class="mid"><policy-card></policy-card><news-card></news-card></div>
          <div class="right"><shipping-card></shipping-card><compliance-card></compliance-card></div>
        </div>
        <div class="scroll">
          <svg height="17" viewBox="0 0 12 17"><path d="M2 11l4-4 4 4z" fill="#505050"/></svg>
          <div class="thumb"></div>
          <svg height="17" viewBox="0 0 12 17"><path d="M2 6l4 4 4-4z" fill="#505050"/></svg>
        </div>
        <div class="fb">FEEDBACK <svg width="8" height="8" viewBox="0 0 8 8"><path d="M.8.8l6.400 6.400M7.200.8L.8 7.200" stroke="#fff" stroke-width="1.100"/></svg></div>
      </main>
      <task-bar></task-bar>`;
  }
}
